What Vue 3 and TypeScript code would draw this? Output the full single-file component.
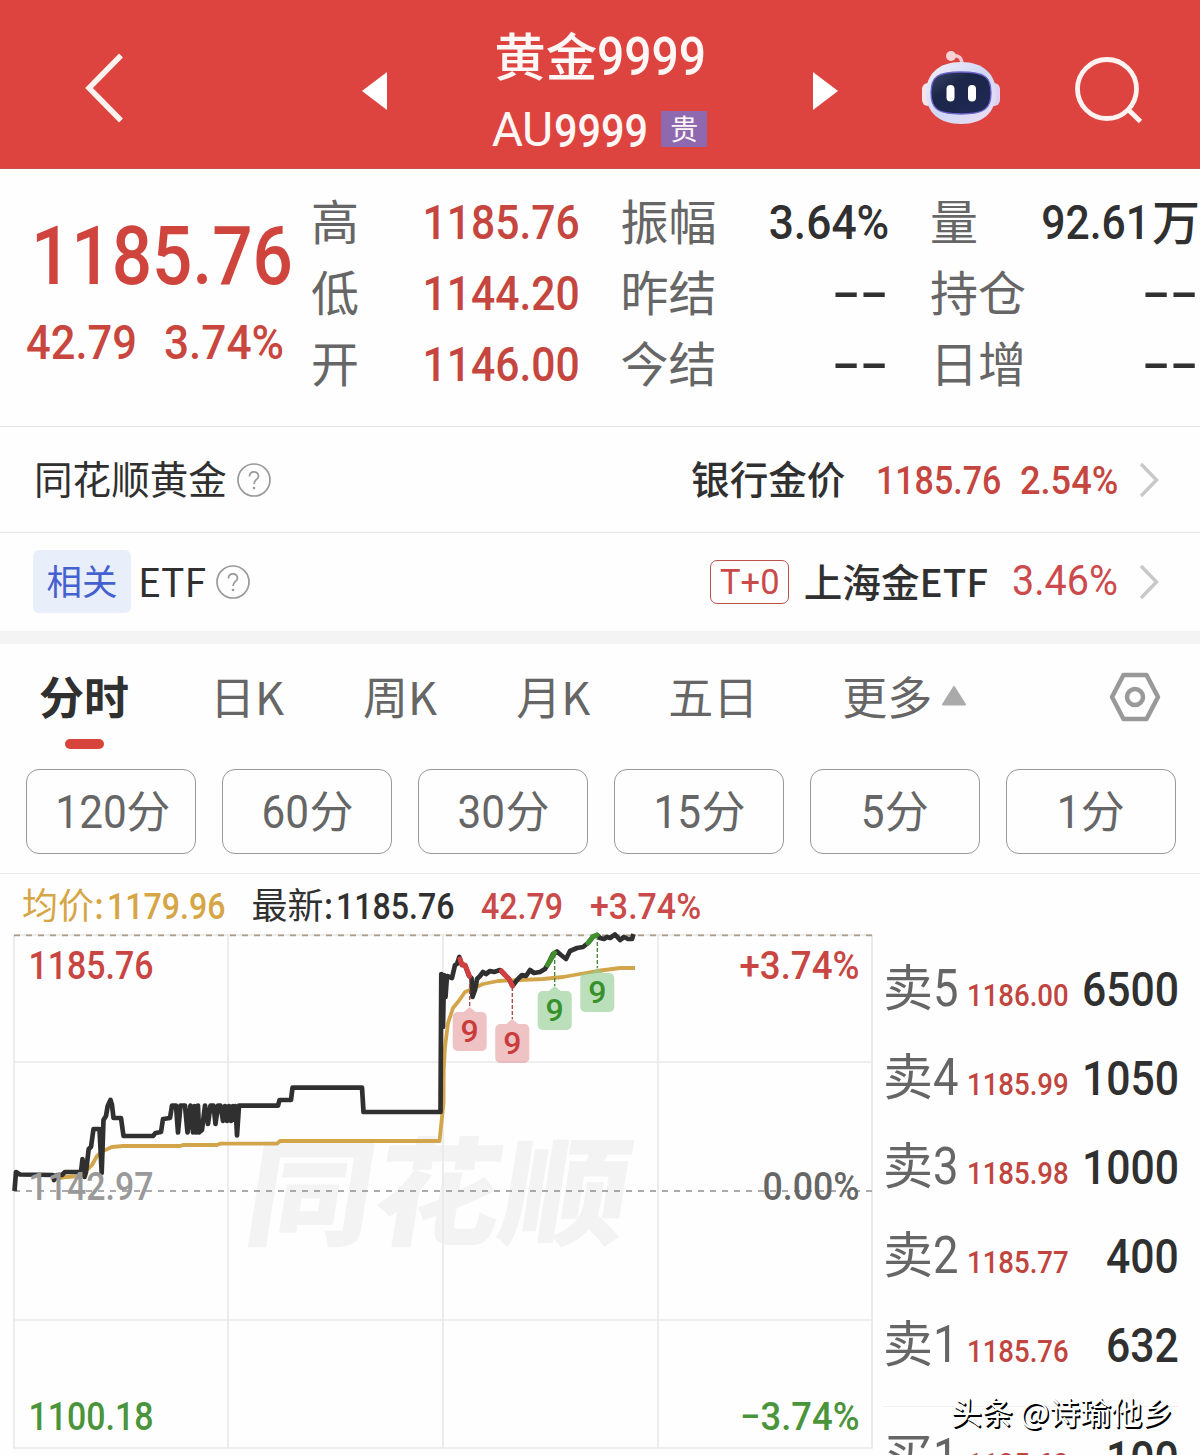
<script setup lang="ts">
interface Stat { label: string; value: string; unit?: string; tone: 'up' | 'flat' }
interface Order { side: string; price: string; volume: string }
interface Marker { x: number; from: number; tip: number; tone: 'sell' | 'buy' }
type Point = [number, number]

const stats: Stat[][] = [
  [
    { label: '高', value: '1185.76', tone: 'up' },
    { label: '低', value: '1144.20', tone: 'up' },
    { label: '开', value: '1146.00', tone: 'up' },
  ],
  [
    { label: '振幅', value: '3.64%', tone: 'flat' },
    { label: '昨结', value: '--', tone: 'flat' },
    { label: '今结', value: '--', tone: 'flat' },
  ],
  [
    { label: '量', value: '92.61', unit: '万', tone: 'flat' },
    { label: '持仓', value: '--', tone: 'flat' },
    { label: '日增', value: '--', tone: 'flat' },
  ],
]

const tabs = ['分时', '日K', '周K', '月K', '五日']
const periods = ['120', '60', '30', '15', '5', '1']

const asks: Order[] = [
  { side: '5', price: '1186.00', volume: '6500' },
  { side: '4', price: '1185.99', volume: '1050' },
  { side: '3', price: '1185.98', volume: '1000' },
  { side: '2', price: '1185.77', volume: '400' },
  { side: '1', price: '1185.76', volume: '632' },
]

const toPath = (points: Point[]): string => 'M' + points.map(p => p.join(' ')).join('L')

const price = toPath([
  [14.5, 1191], [16, 1172], [20, 1174.5], [53, 1175], [54, 1180], [57, 1175], [62, 1175], [65, 1172], [81, 1172],
  [82.5, 1159], [84.5, 1177], [86, 1172], [88.7, 1149], [91, 1147], [93.5, 1129], [99.5, 1129],
  [101.7, 1173], [103.5, 1120], [106, 1116], [107.7, 1106], [110.5, 1100], [112, 1105],
  [113.5, 1118], [121, 1118], [123.5, 1136], [153, 1136], [155.5, 1133], [161, 1132],
  [163, 1119], [170, 1118], [172, 1105.5], [176, 1105.5], [178, 1132.5], [180.5, 1105.5],
  [185, 1105.5], [187.5, 1132.5], [190.5, 1105.5], [193, 1132.5], [194.5, 1106], [196.5, 1132.5], [198, 1105.5],
  [199, 1132.5], [202, 1130], [205, 1105.5], [208, 1124], [210.5, 1105.5], [213.5, 1105.5], [215.5, 1124],
  [218, 1105.5], [220.5, 1105.5], [223, 1121], [225, 1106], [227, 1121], [229, 1106], [231, 1121], [233, 1106], [234.500, 1120], [235.500, 1106],
  [237, 1135.5], [239, 1105.7], [278, 1105.7], [279.5, 1100], [291, 1100], [292.5, 1087.7],
  [362, 1087.7], [363.5, 1112], [440.5, 1112], [441.3, 974], [443, 1027], [444, 975], [445.5, 997], [447, 976], [452, 978],
  [455, 965], [457, 964], [459.3, 957], [462, 965], [465, 965], [469, 976], [471.5, 978], [472.5, 997],
  [475, 990], [477, 979], [480, 976], [483, 972], [486, 974], [490, 971], [494, 972], [500, 970], [505, 975], [509, 979],
  [512.5, 986], [517, 980], [522, 975], [526, 976], [530, 970], [534, 973], [540, 972], [545, 969],
  [548, 964], [553, 954], [557, 951.5], [561, 955], [566, 959], [570, 951], [577, 948],
  [583, 947], [588, 943], [593, 937], [597, 935], [600, 938], [604, 939], [607, 937], [610, 938], [615, 934.5], [620, 940],
  [624, 937], [628, 939], [632, 939], [633.5, 934],
])

const average = toPath([
  [56, 1179], [66, 1177], [80, 1176], [87, 1170], [92, 1165], [97, 1156], [103, 1151], [112, 1147],
  [123, 1146], [180, 1146], [183, 1145], [217, 1145], [220, 1143.7], [277, 1143.7], [280, 1141],
  [439.5, 1141], [443.5, 1103], [443.7, 1070], [445, 1047], [448, 1023], [453, 1008], [458, 1002],
  [465, 992], [472, 989], [483, 984], [498, 981], [543, 979], [563, 977], [580, 974],
  [597, 971], [620, 968], [635, 968],
])

const falls = [
  toPath([[460, 959], [462, 965], [465, 965], [469.5, 976]]),
  toPath([[501.5, 971], [505, 975], [509, 979], [512.5, 986]]),
]
const rises = [
  toPath([[547.5, 965], [550, 961], [554.5, 953]]),
  toPath([[588, 943], [593, 936.5], [597, 935]]),
]

const markers: Marker[] = [
  { x: 469.7, from: 978, tip: 1007, tone: 'sell' },
  { x: 512.3, from: 987, tip: 1019, tone: 'sell' },
  { x: 554.7, from: 954, tip: 986, tone: 'buy' },
  { x: 597.3, from: 936, tip: 968, tone: 'buy' },
]
</script>

<template>
  <main class="app">
    <header class="top">
      <svg class="back" width="44" height="76" viewBox="0 0 44 76"><path d="M38 5.500L6 38L38 70.500" fill="none" stroke="#fff3f1" stroke-width="5.500" /></svg>
      <svg class="prev" width="26" height="44" viewBox="0 0 26 44"><path d="M26 3V41L1 22Z" fill="#fff" /></svg>
      <div class="title">
        <div class="name"><span>黄金</span><span class="num">9999</span></div>
        <div class="code"><i>AU</i><span class="num">9999</span><b class="badge">贵</b></div>
      </div>
      <svg class="next" width="26" height="44" viewBox="0 0 26 44"><path d="M0 3V41L25 22Z" fill="#fff" /></svg>
      <svg class="robot" width="80" height="76" viewBox="0 0 80 76">
        <defs>
          <linearGradient id="shell" x1="0" y1="0" x2="1" y2="1"><stop offset="0" stop-color="#f6f0fb" /><stop offset=".5" stop-color="#cfd8f6" /><stop offset="1" stop-color="#efdcf2" /></linearGradient>
          <linearGradient id="visor" x1="0" y1="0" x2="1" y2="1"><stop offset="0" stop-color="#3a4668" /><stop offset=".35" stop-color="#1b2648" /><stop offset="1" stop-color="#202956" /></linearGradient>
        </defs>
        <path d="M31 6Q41 4 41 15" fill="none" stroke="#f5c8d2" stroke-width="3.500" />
        <circle cx="30" cy="6" r="5" fill="#f8d3d6" />
        <rect x="1" y="33" width="12" height="23" rx="6" fill="#f5e3ee" />
        <rect x="67" y="33" width="12" height="23" rx="6" fill="#ddd0f2" />
        <path d="M40 12C62 12 75 24 75 43C75 62 62 74 40 74S5 62 5 43C5 24 18 12 40 12Z" fill="url(#shell)" />
        <path d="M40 22C64 22 70 27 70 43S63 64 40 64S10 59 10 43S16 22 40 22Z" fill="url(#visor)" stroke="#6f63cf" stroke-width="1.300" />
        <rect x="25.500" y="35" width="8" height="16.500" rx="4" fill="#fff" /><rect x="47" y="35" width="8" height="16.500" rx="4" fill="#fff" />
      </svg>
      <svg class="search" width="72" height="72" viewBox="0 0 72 72" fill="none" stroke="#fff3f1" stroke-width="4.800"><circle cx="33" cy="34" r="29.500" /><path d="M53.500 54L66.500 66.500" /></svg>
    </header>

    <section class="quote">
      <div class="last">
        <div class="last-price num">1185.76</div>
        <div class="change"><span class="num">42.79</span><span class="num">3.74%</span></div>
      </div>
      <div v-for="(col, i) in stats" :key="i" class="stat-col">
        <div v-for="s in col" :key="s.label" class="stat">
          <span class="stat-label">{{ s.label }}</span>
          <span class="stat-value" :class="s.tone"><span class="num" :class="{ dash: s.value === '--', percent: s.value.endsWith('%') }">{{ s.value }}</span><span v-if="s.unit" class="unit">{{ s.unit }}</span></span>
        </div>
      </div>
    </section>

    <section class="link gold">
      <span class="link-name">同花顺黄金</span>
      <svg class="help" width="36" height="36" viewBox="0 0 36 36"><circle cx="18" cy="18" r="16" /><path d="M13.500 14.500C13.500 8.500 22.500 8.500 22.500 14.200C22.500 17.500 18 17.500 18 22" /><circle class="dot" cx="18" cy="26" r="1.300" /></svg>
      <span class="link-right">
        <span class="link-title">银行金价</span>
        <span class="num bank-price">1185.76</span>
        <span class="num bank-pct">2.54%</span>
        <svg class="chev" width="22" height="38" viewBox="0 0 22 38"><path d="M3 3L18.500 19L3 35" /></svg>
      </span>
    </section>

    <section class="link etf">
      <span class="related">相关</span>
      <span class="link-name">ETF</span>
      <svg class="help" width="36" height="36" viewBox="0 0 36 36"><circle cx="18" cy="18" r="16" /><path d="M13.500 14.500C13.500 8.500 22.500 8.500 22.500 14.200C22.500 17.500 18 17.500 18 22" /><circle class="dot" cx="18" cy="26" r="1.300" /></svg>
      <span class="link-right">
        <span class="t0">T+0</span>
        <span class="link-title">上海金ETF</span>
        <span class="num etf-pct">3.46%</span>
        <svg class="chev" width="22" height="38" viewBox="0 0 22 38"><path d="M3 3L18.500 19L3 35" /></svg>
      </span>
    </section>

    <nav class="tabs">
      <span v-for="(t, i) in tabs" :key="t" class="tab" :class="{ active: i === 0 }">{{ t }}</span>
      <span class="tab more">更多<svg width="26" height="22" viewBox="0 0 26 22"><path d="M13 2L24 19.500H2Z" fill="#aaa" stroke="#aaa" stroke-width="2" stroke-linejoin="round" /></svg></span>
      <svg class="settings" width="54" height="50" viewBox="0 0 54 50" fill="none" stroke="#999" stroke-width="4.500" stroke-linejoin="round"><path d="M15.500 3H38.500L50 25L38.500 47H15.500L4 25Z" /><circle cx="27" cy="25" r="8" /></svg>
    </nav>

    <div class="periods">
      <button v-for="p in periods" :key="p" class="period"><span class="num">{{ p }}</span>分</button>
    </div>

    <section class="board">
      <div class="chart-side">
        <div class="legend">
          <span class="avg">均价:<span class="num long">1179.96</span></span>
          <span class="latest">最新:<span class="num long">1185.76</span></span>
          <span class="num diff">42.79</span>
          <span class="num pct">+3.74%</span>
        </div>
        <svg class="chart" width="880" height="521" viewBox="0 934 880 521">
          <text class="mark" x="0" y="0" textLength="382" lengthAdjust="spacingAndGlyphs" transform="translate(241 1236) skewX(-9)">同花顺</text>
          <g stroke="#e9e9e9" stroke-width="1.700" fill="none">
            <path d="M14 935V1448H872V935M228 935V1448M443 935V1448M658 935V1448M14 1062H872M14 1320H872M14 935H872" />
          </g>
          <path d="M14 935.300H872" stroke="#aa9c80" stroke-width="1.700" stroke-dasharray="6 6" />
          <path d="M14 1191H872" stroke="#909090" stroke-width="1.700" stroke-dasharray="6 6" />
          <g fill="none" stroke-linejoin="round">
            <path :d="average" stroke="#d2a54b" stroke-width="3.800" />
            <path :d="price" stroke="#303030" stroke-width="4.700" />
            <path v-for="d in falls" :key="d" :d="d" stroke="#d23f40" stroke-width="5" stroke-linecap="round" />
            <path v-for="d in rises" :key="d" :d="d" stroke="#41922d" stroke-width="5" stroke-linecap="round" />
          </g>
          <g v-for="m in markers" :key="m.x" :class="m.tone">
            <path class="lead" :d="`M${m.x} ${m.from}V${m.tip}`" />
            <path class="flag" :d="`M${m.x} ${m.tip}l6 5h6a5 5 0 0 1 5 5v29a5 5 0 0 1-5 5h-24a5 5 0 0 1-5-5v-29a5 5 0 0 1 5-5h6z`" />
            <text class="nine" :x="m.x" :y="m.tip + 34.5">9</text>
          </g>
          <g class="axis">
            <text x="28.500" y="979" textLength="125" lengthAdjust="spacingAndGlyphs" class="up">1185.76</text>
            <text x="28.500" y="1200" textLength="125" lengthAdjust="spacingAndGlyphs" class="base">1142.97</text>
            <text x="28.500" y="1430" textLength="125" lengthAdjust="spacingAndGlyphs" class="down">1100.18</text>
            <text x="739.500" y="979" textLength="120" lengthAdjust="spacingAndGlyphs" class="up">+3.74%</text>
            <text x="762.500" y="1200" textLength="97" lengthAdjust="spacingAndGlyphs" class="mid">0.00%</text>
            <text x="740" y="1430" textLength="119.500" lengthAdjust="spacingAndGlyphs" class="down">−3.74%</text>
          </g>
        </svg>
      </div>
      <aside class="book">
        <div v-for="o in asks" :key="o.side" class="order">
          <span class="side">卖<span class="num">{{ o.side }}</span></span>
          <span class="num order-price">{{ o.price }}</span>
          <span class="num volume">{{ o.volume }}</span>
        </div>
        <div class="order bid">
          <span class="side">买<span class="num">1</span></span>
          <span class="num order-price">1185.60</span>
          <span class="num volume">100</span>
        </div>
        <div class="credit">头条 @诗瑜他乡</div>
      </aside>
    </section>
  </main>
</template>

<style>
body { margin: 0; background: #fff; }
</style>

<style scoped>
.app {
  width: 1200px; height: 1455px; overflow: hidden; background: #fefefe; color: #303030;
  font-family: "Noto Sans CJK SC", sans-serif; display: flex; flex-direction: column;
}
.app > * { flex: none; box-sizing: border-box; }
svg { display: block; flex: none; }
/* Narrowed digits; the negative margins give back the width the scaling frees. */
.num { display: inline-block; font-family: Roboto, sans-serif; font-weight: 500; transform: scaleX(.89); transform-origin: left; }

.top { height: 169px; background: #dd4440; color: #fff7f5; display: flex; border-bottom: 1px solid #c4504b; }
.back { margin: 50px 0 0 83px; }
.prev { margin: 69px 0 0 234px; }
.title { width: 425px; display: flex; flex-direction: column; align-items: center; padding-top: 18px; box-sizing: border-box; }
.name { font-size: 51.500px; line-height: 72px; height: 72px; font-weight: 500; display: flex; }
.name .num { font-size: 53px; padding-top: 3px; margin-right: -13px; transform: scaleX(.905); }
.code { display: flex; align-items: center; height: 72px; font-size: 48px; padding-top: 3px; }
.code .num { font-size: 46px; transform: scaleX(.9); margin: 3px -11px 0 1px; }
.code i { font: 400 48px Roboto, sans-serif; letter-spacing: -0.01em; }
.badge { width: 46px; height: 36px; margin-left: 14px; background: #8f69b0; font-size: 28px; line-height: 34px; text-align: center; font-weight: 400; }
.next { margin: 69px 0 0 1px; }
.robot { margin: 50px 0 0 82px; }
.search { margin: 55px 0 0 73px; }

.quote { height: 258px; border-bottom: 1.500px solid #e4e4e4; display: flex; padding-top: 18px; }
.last { width: 311px; color: #d0443e; }
.last-price { font-size: 82px; line-height: 90px; padding-top: 24px; margin: 0 -40px 0 31px; transform: scaleX(.866); }
.change { font-size: 48px; line-height: 60px; padding: 12px 0 0 26px; display: flex; color: #c9463f; }
.change .num { transform: scaleX(.905); }
.change .num + .num { margin-left: 16px; transform: scaleX(.92); }
.stat-col { width: 269px; margin-right: 40.500px; flex: none; }
.stat-col:last-child { margin-right: 0; }
.stat { height: 71px; display: flex; justify-content: space-between; align-items: center; white-space: nowrap; }
.stat-label { font-size: 48px; line-height: 71px; color: #666; margin-top: -6px; }
.stat-value { font-size: 49px; line-height: 71px; display: flex; }
.stat-value .num { transform: scaleX(.87); transform-origin: right; }
.stat-value .percent { transform: scaleX(.905); }
.stat-value.up { color: #c5463f; }
.stat-value .unit { font-size: 48px; font-weight: 500; margin: -3px -1px 0 2px; }
.stat-value .dash { transform: scaleX(1.68); margin: -3px 1px 0 0; }

.link { display: flex; align-items: center; border-bottom: 1.500px solid #e4e4e4; }
.gold { height: 106px; padding: 0 40px 0 34px; }
.etf { height: 111px; padding: 0 40px 0 33px; border-bottom: 13px solid #f4f4f4; }
.link-name { font-size: 38.600px; line-height: 56px; margin-top: -5px; }
.etf .link-name { font-size: 39.200px; }
.help { margin-left: 9px; fill: none; stroke: #999; stroke-width: 1.700; }
.help .dot { fill: #999; stroke: none; }
.link-right { margin-left: auto; display: flex; align-items: center; }
.link-title { font-size: 38.600px; line-height: 56px; font-weight: 500; margin-top: -5px; }
.bank-price { font-size: 39.500px; margin: 2px -24px 0 31px; color: #c5463f; transform: scaleX(.86); }
.bank-pct { font-size: 39.500px; margin: 2px -.19em 0 22px; color: #c5463f; transform: scaleX(.915); }
.gold .chev { margin-left: 18px; }
.etf-pct { font-size: 42px; font-weight: 400; margin: -3px -.16em 0 24px; color: #cc4a4c; transform: scaleX(.94); }
.chev { margin-left: 20px; fill: none; stroke: #c8c8c8; stroke-width: 3.400; }
.related { width: 98px; height: 63px; border-radius: 6px; background: #e9eefb; color: #4561cf; font-size: 35.500px; line-height: 60px; text-align: center; margin: -1px 7px 0 0; }
.t0 { box-sizing: border-box; width: 79px; height: 44px; border: 1.500px solid #b9514d; border-radius: 7px; font: 400 34.500px/43px Roboto, sans-serif; text-align: center; color: #c94a49; margin-right: 14.500px; }

.tabs { height: 125px; display: flex; padding: 22px 0 0 39px; font-size: 45px; line-height: 60px; color: #666; }
.tab { white-space: nowrap; height: 60px; }
.tab:nth-child(2) { margin-left: 81px; }
.tab:nth-child(3) { margin-left: 79px; }
.tab:nth-child(4) { margin-left: 79px; }
.tab:nth-child(5) { margin-left: 78px; }
.active { font-weight: 700; color: #303030; }
.active::after { content: ""; display: block; width: 39px; height: 10px; border-radius: 5px; background: #d7443b; margin: 13px auto 0; }
.more { margin-left: 84px; display: flex; }
.more svg { margin: 19px 0 0 9px; }
.settings { margin: 6px 0 0 141px; }

.periods { height: 105px; display: flex; gap: 26px; padding-left: 26px; border-bottom: 1.500px solid #ececec; }
.period { box-sizing: border-box; width: 170px; height: 85px; border: 1.500px solid #999; border-radius: 13px; background: none; padding: 0 2px 3px 0; font: 400 44px/78px "Noto Sans CJK SC", sans-serif; color: #666; }
.period .num { font-size: 45.500px; font-weight: 400; transform: scaleX(.93); transform-origin: right; }

.board { display: flex; height: 581px; }
.chart-side { width: 880px; }
.legend { height: 60px; display: flex; align-items: baseline; padding-left: 22px; font-size: 36px; line-height: 58px; white-space: nowrap; }
.legend .num { font-size: 36.500px; }
.legend .long { margin: 0 -.43em 0 2.500px; transform: scaleX(.88); }
.avg { color: #d5a546; }
.latest { margin-left: 26px; }
.diff, .pct { color: #c94a48; }
.legend .diff { margin: 0 -.25em 0 26px; transform: scaleX(.88); }
.legend .pct { margin-left: 25px; transform: scaleX(.93); }
.chart { overflow: visible; }
.mark { font: 900 117px "Noto Sans CJK SC", sans-serif; fill: #f3f3f3; }
.axis text { font-family: Roboto, sans-serif; font-weight: 500; font-size: 38.500px; }
.axis .up { fill: #c94542; }
.axis .down { fill: #4a943b; }
.axis .base { fill: #999; }
.axis .mid { fill: #666; }
.lead { stroke-width: 1.300; stroke-dasharray: 4 2; }
.sell .lead { stroke: #a94442; }
.buy .lead { stroke: #41802f; }
.sell .flag { fill: #e59a9b; fill-opacity: .6; }
.buy .flag { fill: #94cd91; fill-opacity: .63; }
.nine { font: 500 32px Roboto, sans-serif; text-anchor: middle; }
.sell .nine { fill: #c83c3c; }
.buy .nine { fill: #37912b; }

.book { width: 320px; position: relative; padding: 66px 21px 0 3px; box-sizing: border-box; }
.order { height: 89px; line-height: 89px; display: flex; align-items: baseline; white-space: nowrap; }
.order > * { flex: none; }
.side { font-size: 50px; color: #666; width: 84px; }
.side .num { font-size: 51px; font-weight: 400; }
.order-price { font-size: 31.500px; color: #c0453f; margin-right: -14px; transform: scaleX(.875); }
.volume { font-size: 48px; margin-left: auto; transform-origin: right; }
.bid { border-top: 1.500px solid #f0f0f0; margin-top: 21px; padding-top: 2px; }
.credit { position: absolute; left: 71px; top: 515px; font-size: 31px; line-height: 44px; color: #fff; white-space: nowrap; text-shadow: 1.500px 1.500px 0 #000, 1px 1px 0 #000; }
</style>
